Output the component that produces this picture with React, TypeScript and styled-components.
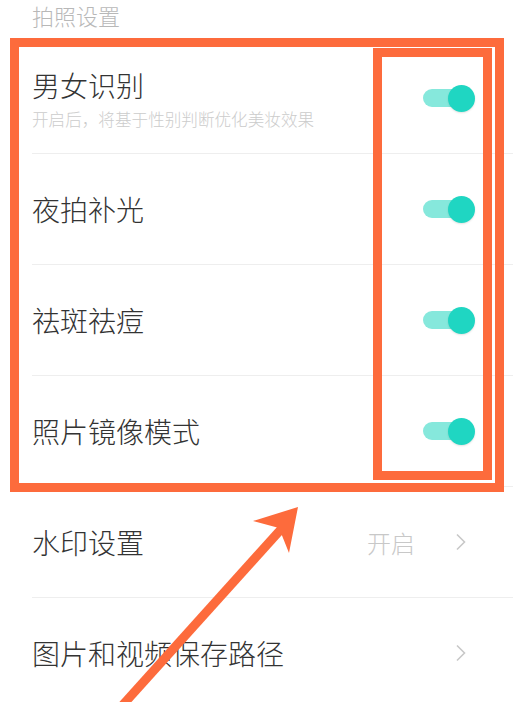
import styled, { createGlobalStyle } from "styled-components";

const GlobalStyle = createGlobalStyle`
  html, body {
    margin: 0;
    padding: 0;
    background: #ffffff;
  }
  body {
    font-family: "Noto Sans CJK SC", "Noto Sans", sans-serif;
  }
`;

const ORANGE = "#fd6b3c";

const Page = styled.div`
  position: relative;
  width: 513px;
  height: 702px;
  overflow: hidden;
  background: #ffffff;
`;

const SectionTitle = styled.div`
  height: 43px;
  padding-left: 32px;
  font-size: 22px;
  font-weight: 300;
  line-height: 30px;
  color: #b8b8b8;
`;

const Row = styled.div`
  height: 110px;
  margin-left: 32px;
  padding-right: 38px;
  border-bottom: 1px solid #eeeeee;
  display: flex;
  align-items: center;
  justify-content: space-between;
`;

const Texts = styled.div`
  display: flex;
  flex-direction: column;
`;

const Title = styled.div`
  font-size: 28px;
  font-weight: 300;
  line-height: 36px;
  color: #333333;
`;

const Sub = styled.div`
  margin-top: 5px;
  font-size: 16.6px;
  font-weight: 300;
  line-height: 22px;
  color: #cccccc;
`;

const Right = styled.div`
  display: flex;
  align-items: center;
  gap: 40px;
  margin-right: 8px;
`;

const Value = styled.span`
  font-size: 24px;
  font-weight: 300;
  color: #c8c8c8;
`;

const Track = styled.div`
  position: relative;
  width: 52px;
  height: 27px;
  display: flex;
  align-items: center;
`;

const TrackBar = styled.div`
  width: 44px;
  height: 18px;
  border-radius: 9px;
  background: #86e8dc;
`;

const Knob = styled.div`
  position: absolute;
  right: 0;
  top: 0;
  width: 27px;
  height: 27px;
  border-radius: 50%;
  background: #1fd6c2;
  box-shadow: 0 1px 2px rgba(0, 0, 0, 0.12);
`;

const Box = styled.div<{ $l: number; $t: number; $w: number; $h: number }>`
  position: absolute;
  left: ${(p) => p.$l}px;
  top: ${(p) => p.$t}px;
  width: ${(p) => p.$w}px;
  height: ${(p) => p.$h}px;
  box-sizing: border-box;
  border: 9px solid ${ORANGE};
  pointer-events: none;
`;

const ArrowSvg = styled.svg`
  position: absolute;
  left: 0;
  top: 0;
  pointer-events: none;
`;

function Toggle() {
  return (
    <Track>
      <TrackBar />
      <Knob />
    </Track>
  );
}

function Chevron() {
  return (
    <svg width="12" height="18" viewBox="0 0 12 18">
      <path d="M2 1.5 L9.5 9 L2 16.5" fill="none" stroke="#c8c8c8" strokeWidth="1.6" />
    </svg>
  );
}

const toggles = [
  { title: "男女识别", sub: "开启后，将基于性别判断优化美妆效果" },
  { title: "夜拍补光" },
  { title: "祛斑祛痘" },
  { title: "照片镜像模式" },
];

export default function App() {
  return (
    <Page>
      <GlobalStyle />
      <SectionTitle>拍照设置</SectionTitle>
      {toggles.map((t) => (
        <Row key={t.title}>
          <Texts>
            <Title>{t.title}</Title>
            {t.sub && <Sub>{t.sub}</Sub>}
          </Texts>
          <Toggle />
        </Row>
      ))}
      <Row>
        <Title>水印设置</Title>
        <Right>
          <Value>开启</Value>
          <Chevron />
        </Right>
      </Row>
      <Row>
        <Title>图片和视频保存路径</Title>
        <Right>
          <Chevron />
        </Right>
      </Row>

      <Box $l={10} $t={38} $w={494} $h={454} />
      <Box $l={373} $t={48} $w={119} $h={432} />

      <ArrowSvg width="513" height="702" viewBox="0 0 513 702">
        <line x1="120" y1="708" x2="284" y2="526" stroke={ORANGE} strokeWidth="9" />
        <polygon points="298,507 253,521 279,528 289,553" fill={ORANGE} />
      </ArrowSvg>
    </Page>
  );
}
